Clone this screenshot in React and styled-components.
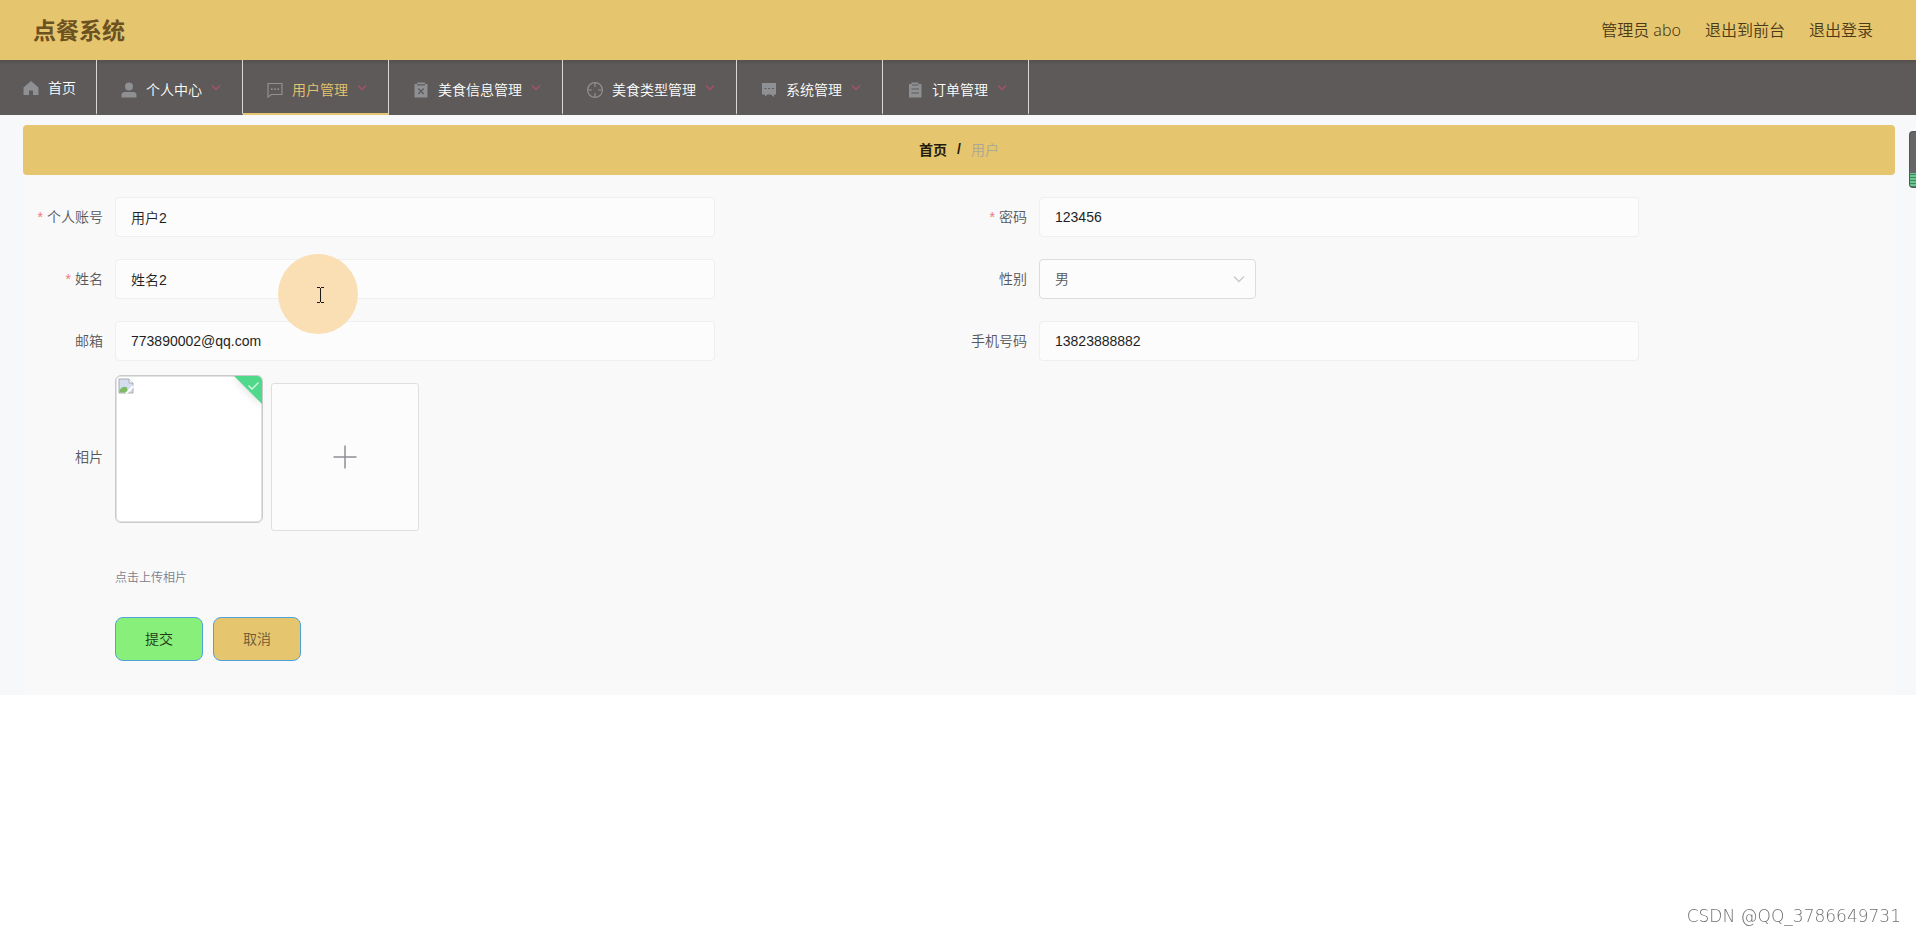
import React, { useState } from 'react';
import styled, { createGlobalStyle, css } from 'styled-components';

const GlobalStyle = createGlobalStyle`
    * {
        box-sizing: border-box;
    }
    body {
        margin: 0;
        background: #fff;
        font-family: "Liberation Sans", "Noto Sans CJK SC", sans-serif;
        font-size: 14px;
        font-weight: 350;
    }
    button, input, select {
        font-family: inherit;
        font-weight: inherit;
    }
`;

const Header = styled.header`
    display: flex;
    align-items: center;
    justify-content: space-between;
    height: 60px;
    padding: 0 43px 0 33px;
    background: #e6c56f;
`;

const Logo = styled.h1`
    margin: 0;
    padding-top: 2px;
    font-size: 23px;
    font-weight: 700;
    line-height: 34px;
    color: #6b5220;
`;

const UserLinks = styled.div`
    display: flex;
    gap: 24px;
    padding-bottom: 2px;
    font-family: "Noto Sans", "Noto Sans CJK SC", sans-serif;
    font-size: 16px;
    color: #4c3a16;
`;

const UserLink = styled.a`
    color: inherit;
    text-decoration: none;
`;

const Nav = styled.nav`
    display: flex;
    height: 55px;
    background: linear-gradient(#53504e, #5d5a59 5px);
`;

const NavItem = styled.a`
    display: flex;
    align-items: center;
    padding: ${props => props.$single ? '2px 20px 0 19px' : '6px 20px 0'};
    border-right: 1px solid #d8d8d8;
    border-bottom: 2px solid transparent;
    font-size: 14px;
    line-height: 20px;
    text-decoration: none;
    color: #fff;
    ${props => props.$active && css`
        color: #e6c56f;
        border-bottom-color: #e6c56f;
    `}
`;

const NavIcon = styled.svg`
    width: 18px;
    height: 18px;
    margin: 0 8px 0 3px;
    overflow: visible;
    fill: #8f9093;
    stroke: none;
`;

const NavArrow = styled.svg`
    width: 12px;
    height: 12px;
    margin: 0 0 4px 8px;
    fill: none;
    stroke: #a8506c;
    stroke-width: 1.4;
`;

const Main = styled.main`
    padding: 10px 21px 0 23px;
    background: #f7f8fa;
`;

const Breadcrumb = styled.div`
    display: flex;
    align-items: center;
    justify-content: center;
    gap: 10px;
    height: 50px;
    padding-bottom: 2px;
    border-radius: 4px;
    background: #e6c56f;
    color: #221a0c;
    font-weight: 700;
`;

const HomeLink = styled.a`
    color: inherit;
    text-decoration: none;
`;

const Current = styled.span`
    color: #aca795;
    font-weight: 350;
`;

const Form = styled.form`
    padding: 22px 12px 34px;
    background: #f9f9f9;
`;

const FieldGrid = styled.div`
    display: grid;
    grid-template-columns: 1fr 1fr;
    row-gap: 22px;
`;

const Field = styled.div`
    display: flex;
    align-items: center;
    min-height: 40px;
`;

const Label = styled.label`
    flex: none;
    width: 80px;
    padding: 0 12px 2px 0;
    text-align: right;
    white-space: nowrap;
    color: #55575b;
    ${props => props.$required && css`
        &::before {
            content: '*';
            margin-right: 4px;
            color: #f07880;
        }
    `}
`;

const Input = styled.input`
    flex: 0 1 600px;
    min-width: 0;
    height: 40px;
    padding: 0 15px;
    border: 1px solid #efefef;
    border-radius: 4px;
    outline: none;
    background: #fcfcfc;
    color: #1f1f1f;
    font-size: 14px;
`;

const SelectBox = styled.div`
    display: grid;
    align-items: center;
    width: 217px;
`;

const Select = styled.select`
    grid-area: 1 / 1;
    width: 100%;
    height: 40px;
    padding: 0 30px 0 15px;
    appearance: none;
    border: 1px solid #dcdcdf;
    border-radius: 4px;
    outline: none;
    background: #fcfcfc;
    color: #55575b;
    font-size: 14px;
`;

const SelectArrow = styled.svg`
    grid-area: 1 / 1;
    justify-self: end;
    width: 12px;
    height: 12px;
    margin-right: 11px;
    fill: none;
    stroke: #c8cacf;
    stroke-width: 1.3;
    pointer-events: none;
`;

const PhotoField = styled.div`
    display: flex;
    align-items: center;
    margin-top: 14px;
`;

const Photos = styled.div`
    display: flex;
    gap: 8px;
    padding-bottom: 8px;
`;

const Photo = styled.div`
    position: relative;
    width: 148px;
    height: 148px;
    margin-bottom: 8px;
    border: 1px solid #c9cacc;
    border-radius: 6px;
    overflow: hidden;
    background: #fff;
    box-shadow: inset 0 0 0 1px #e2e2e2;
`;

const BrokenImage = styled.svg`
    display: block;
    width: 16px;
    height: 16px;
    margin: 2px;
`;

const DoneMark = styled.svg`
    position: absolute;
    top: 0;
    right: 0;
    width: 28px;
    height: 28px;
    filter: drop-shadow(0 1px 4px rgba(0, 0, 0, 0.15));
`;

const AddPhoto = styled.button`
    display: flex;
    align-items: center;
    justify-content: center;
    width: 148px;
    height: 148px;
    margin-top: 8px;
    padding: 0;
    border: 1px solid #dedfe2;
    border-radius: 3px;
    background: #fcfcfc;
    color: #8c8f94;
`;

const Hint = styled.div`
    margin: 29px 0 0 80px;
    font-size: 12px;
    line-height: 20px;
    color: #7b7e8a;
`;

const Actions = styled.div`
    display: flex;
    gap: 10px;
    margin: 29px 0 0 80px;
`;

const Button = styled.button`
    width: 88px;
    height: 44px;
    padding: 0 0 2px;
    border: 1px solid #4fa3d8;
    border-radius: 8px;
    font-size: 14px;
    background: ${props => props.$primary ? '#88f07a' : '#e6c56f'};
    color: ${props => props.$primary ? '#1f3518' : '#6a5932'};
`;

const SideGauge = styled.div`
    position: fixed;
    top: 131px;
    right: 0;
    width: 7px;
    height: 57px;
    border: 1px solid #555;
    border-right: 0;
    border-radius: 4px 0 0 4px;
    background: linear-gradient(#666 0 41px, transparent 41px),
        repeating-linear-gradient(#3f8a5c 0 1px, #6ac48d 1px 3px);
`;

const ClickHalo = styled.svg`
    position: absolute;
    top: 254px;
    left: 278px;
    width: 80px;
    height: 80px;
    pointer-events: none;
`;

const Watermark = styled.footer`
    position: fixed;
    right: 15px;
    bottom: 8px;
    font-family: "DejaVu Sans", sans-serif;
    font-size: 17px;
    font-weight: 200;
    line-height: 24px;
    color: #707070;
`;

const icons = {
    home: <path d="M9 2 L1.5 8.5 V16 H7 V11.500 H11 V16 H16.500 V8.500 Z" />,
    user: <path d="M9 1.500 a4 4 0 1 1 0 8 a4 4 0 0 1 0 -8 Z M1.500 16.500 V14 Q1.500 11 5 11 H13 Q16.500 11 16.500 14 V16.500 Z" />,
    chat: (
        <g>
            <path d="M2 2.500 H16 V13.500 H5.500 L2 16 Z" fill="none" stroke="#8f9093" strokeWidth="1.200" />
            <path d="M5 7.300 h1.600 v1.600 h-1.600 Z M8.200 7.300 h1.600 v1.600 h-1.600 Z M11.400 7.300 h1.600 v1.600 h-1.600 Z" />
        </g>
    ),
    failed: (
        <g>
            <path d="M2.500 3 H5 V1.500 H13 V3 H15.500 V16.500 H2.500 Z" />
            <path d="M5 3.800 H13 M6.300 7.500 L11.700 13 M11.700 7.500 L6.300 13" stroke="#5d5a59" strokeWidth="1.200" />
        </g>
    ),
    aim: (
        <g fill="none" stroke="#8f9093" strokeWidth="1.200">
            <circle cx="9" cy="9" r="7.400" />
            <path d="M9 1.500 V6 M9 12 V16.500 M1.500 9 H6 M12 9 H16.500" />
        </g>
    ),
    message: (
        <g>
            <path d="M2 2 H16 V13.500 H14 V16 L11 13.500 H7.500 L5 15.500 V13.500 H2 Z" />
            <path d="M4.500 7.500 h2 M8.200 7.500 h2 M12 7.500 h2" stroke="#5d5a59" />
        </g>
    ),
    order: (
        <g>
            <path d="M3 3 H5.500 V1.500 H12.500 V3 H15.500 V16.500 H3 Z" />
            <path d="M6 4 H12.500 M5.500 8 H13 M5.500 12 H13" stroke="#5d5a59" strokeWidth="1.200" />
        </g>
    ),
};

const menus = [
    { title: '首页', icon: 'home', single: true },
    { title: '个人中心', icon: 'user' },
    { title: '用户管理', icon: 'chat', active: true },
    { title: '美食信息管理', icon: 'failed' },
    { title: '美食类型管理', icon: 'aim' },
    { title: '系统管理', icon: 'message' },
    { title: '订单管理', icon: 'order' },
];

const fields = [
    { name: 'account', label: '个人账号', required: true },
    { name: 'password', label: '密码', required: true },
    { name: 'fullname', label: '姓名', required: true },
    { name: 'gender', label: '性别', options: ['男', '女'] },
    { name: 'email', label: '邮箱' },
    { name: 'phone', label: '手机号码' },
];

const user = {
    account: '用户2',
    password: '123456',
    fullname: '姓名2',
    gender: '男',
    email: '773890002@qq.com',
    phone: '13823888882',
};

const FormField = ({ field, value, onChange }) => (
    <Field>
        <Label htmlFor={field.name} $required={field.required}>{field.label}</Label>
        {field.options ? (
            <SelectBox>
                <Select id={field.name} name={field.name} value={value} onChange={onChange}>
                    {field.options.map(option => <option key={option}>{option}</option>)}
                </Select>
                <SelectArrow viewBox="0 0 12 12"><path d="M1 3.500 L6 8.500 L11 3.500" /></SelectArrow>
            </SelectBox>
        ) : (
            <Input id={field.name} name={field.name} value={value} onChange={onChange} />
        )}
    </Field>
);

const App = () => {
    const [values, setValues] = useState(user);

    const onChange = (e) => {
        setValues({ ...values, [e.target.name]: e.target.value });
    };

    return (
        <>
            <GlobalStyle />
            <Header>
                <Logo>点餐系统</Logo>
                <UserLinks>
                    <span>管理员 abo</span>
                    <UserLink href="#front">退出到前台</UserLink>
                    <UserLink href="#logout">退出登录</UserLink>
                </UserLinks>
            </Header>
            <Nav>
                {menus.map(menu => (
                    <NavItem key={menu.title} href="#menu" $active={menu.active} $single={menu.single}>
                        <NavIcon viewBox="0 0 18 18">{icons[menu.icon]}</NavIcon>
                        {menu.title}
                        {!menu.single && (
                            <NavArrow viewBox="0 0 12 12"><path d="M2 3.500 L6 7.500 L10 3.500" /></NavArrow>
                        )}
                    </NavItem>
                ))}
            </Nav>
            <Main>
                <Breadcrumb>
                    <HomeLink href="#home">首页</HomeLink>
                    <span>/</span>
                    <Current>用户</Current>
                </Breadcrumb>
                <Form onSubmit={e => e.preventDefault()}>
                    <FieldGrid>
                        {fields.map(field => (
                            <FormField key={field.name} field={field} value={values[field.name]} onChange={onChange} />
                        ))}
                    </FieldGrid>
                    <PhotoField>
                        <Label htmlFor="photo">相片</Label>
                        <Photos>
                            <Photo>
                                <BrokenImage viewBox="0 0 16 16">
                                    <path d="M1 1 H11 L15 5 V15 H1 Z" fill="#d5def0" stroke="#a9abb0" />
                                    <path d="M1.500 14.500 V12 Q5 7 9 9.500 L10 14.500 Z" fill="#7dbb62" />
                                    <path d="M11 1 V5 H15" fill="#fff" stroke="#a9abb0" />
                                    <path d="M15.500 8 L8 15.500" stroke="#fff" strokeWidth="2" />
                                </BrokenImage>
                                <DoneMark viewBox="0 0 28 28">
                                    <path d="M0 0 H28 V28 Z" fill="#50d98a" />
                                    <path d="M14.500 9.500 L18 13 L24.500 6.500" fill="none" stroke="#d9f8e6" strokeWidth="1.300" />
                                </DoneMark>
                            </Photo>
                            <AddPhoto id="photo" type="button" aria-label="添加相片">
                                <svg width="24" height="24" viewBox="0 0 24 24" stroke="currentColor" strokeWidth="1.500">
                                    <path d="M12 0.500 V23.500 M0.500 12 H23.500" />
                                </svg>
                            </AddPhoto>
                        </Photos>
                    </PhotoField>
                    <Hint>点击上传相片</Hint>
                    <Actions>
                        <Button type="submit" $primary>提交</Button>
                        <Button type="button">取消</Button>
                    </Actions>
                </Form>
            </Main>
            <SideGauge />
            <ClickHalo viewBox="0 0 80 80">
                <circle cx="40" cy="40" r="40" fill="#f9dfb3" />
                <path d="M39 33.500 h3 M43 33.500 h3 M42.500 34 V48 M39 48.500 h3 M43 48.500 h3" stroke="#1d1b18" fill="none" />
            </ClickHalo>
            <Watermark>CSDN @QQ_3786649731</Watermark>
        </>
    );
};

export default App;
